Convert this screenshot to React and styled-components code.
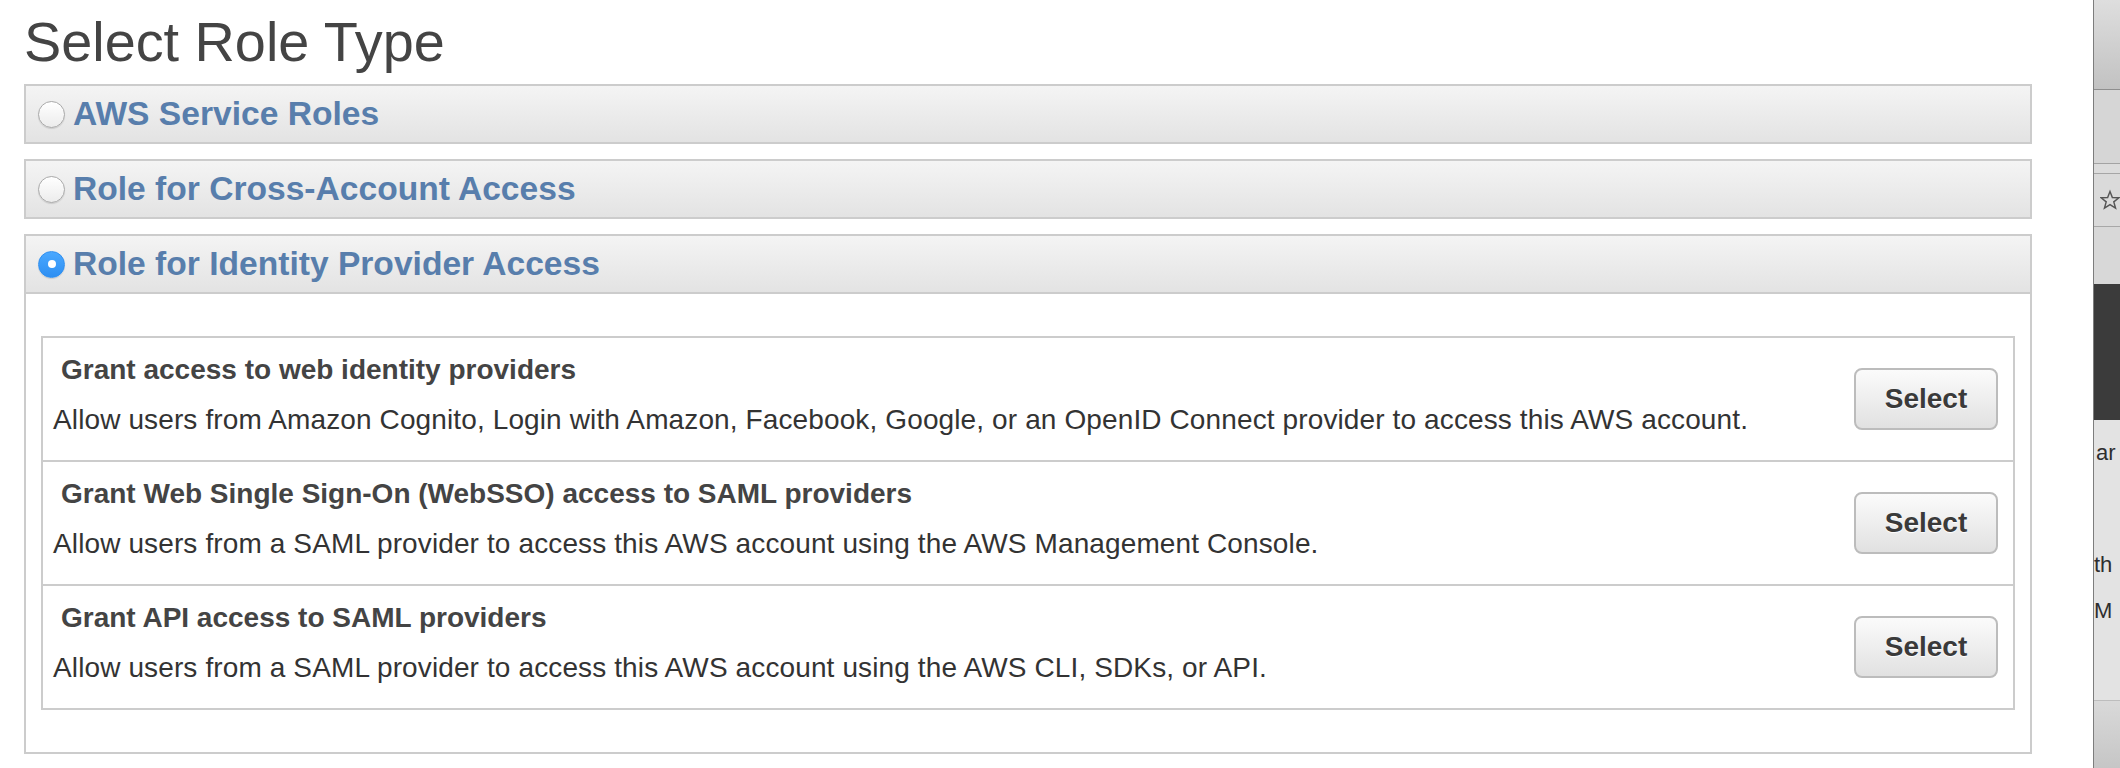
import React from 'react';
import styled, { createGlobalStyle } from 'styled-components';

const GlobalStyle = createGlobalStyle`
  html, body {
    margin: 0;
    padding: 0;
    background: #fff;
    overflow: hidden;
  }
  body {
    font-family: "Liberation Sans", Arial, Helvetica, sans-serif;
  }
`;

const Page = styled.div`
  display: flex;
  width: 2120px;
  height: 768px;
`;

const Main = styled.main`
  flex: 1;
  padding: 0 61px 0 24px;
`;

const Title = styled.h1`
  margin: 0;
  font-size: 55.8px;
  line-height: 84px;
  font-weight: 400;
  color: #444;
`;

const Section = styled.section`
  margin-bottom: 15px;
`;

const SectionHeader = styled.label`
  display: flex;
  align-items: center;
  gap: 8px;
  box-sizing: border-box;
  height: 60px;
  padding-left: 12px;
  border: 2px solid #cccccc;
  background: linear-gradient(#f4f4f4, #e3e3e3);
  cursor: pointer;
`;

const Radio = styled.span`
  position: relative;
  box-sizing: border-box;
  width: 27px;
  height: 27px;
  border-radius: 50%;
  flex: none;
  border: 1px solid ${({ checked }) => (checked ? '#2f8ff0' : '#a9a9a9')};
  background: ${({ checked }) => (checked
    ? 'linear-gradient(#4aa8ff, #2e8ff2)'
    : 'linear-gradient(#ffffff, #ececec)')};
  box-shadow: 0 1px 1px rgba(0, 0, 0, .12);

  &::after {
    content: '';
    display: ${({ checked }) => (checked ? 'block' : 'none')};
    position: absolute;
    left: 50%;
    top: 50%;
    width: 8px;
    height: 8px;
    margin: -4px 0 0 -4px;
    border-radius: 50%;
    background: #fff;
  }
`;

const SectionTitle = styled.span`
  font-size: 33.6px;
  font-weight: 700;
  color: #587eac;
`;

const SectionBody = styled.div`
  border: 2px solid #cccccc;
  border-top: 0;
  padding: 42px 15px 42px;
`;

const ProviderList = styled.div`
  border: 2px solid #cccccc;
`;

const ProviderRow = styled.div`
  display: flex;
  align-items: center;
  justify-content: space-between;
  padding: 16px 15px 24px 10px;

  & + & {
    border-top: 2px solid #cccccc;
  }
`;

const ProviderText = styled.div`
  display: flex;
  flex-direction: column;
  gap: 18px;
`;

const ProviderName = styled.div`
  padding-left: 8px;
  font-size: 28px;
  line-height: 32px;
  font-weight: 700;
  color: #444;
`;

const ProviderDesc = styled.div`
  font-size: 28px;
  line-height: 32px;
  letter-spacing: 0.12px;
  color: #333;
`;

const SelectButton = styled.button`
  box-sizing: border-box;
  width: 144px;
  height: 62px;
  margin-top: 8px;
  border: 2px solid #bcbcbc;
  border-radius: 8px;
  background: linear-gradient(#fbfbfb, #e1e1e1);
  font-family: inherit;
  font-size: 28px;
  font-weight: 700;
  color: #3a3a3a;
  text-shadow: 0 1px 1px #fff;
  cursor: pointer;
`;

/* slice of a neighbouring window at the right screen edge */
const SideStrip = styled.aside`
  width: 26px;
  display: flex;
  flex-direction: column;
  overflow: hidden;
  border-left: 1px solid #7d7d7d;
  box-shadow: inset 3px 0 3px -2px rgba(0, 0, 0, .25);
`;

const StripBand = styled.div`
  flex: ${({ h }) => (h ? `0 0 ${h}px` : '1')};
  background: ${({ bg }) => bg};
  border-bottom: ${({ line }) => (line ? `1px solid ${line}` : '0')};
  overflow: hidden;
`;

const StarSlot = styled.div`
  display: flex;
  align-items: center;
  height: 100%;
  padding-left: 6px;
`;

const StripText = styled.div`
  margin-top: ${({ top }) => top}px;
  padding-left: ${({ indent }) => indent}px;
  font-size: 22px;
  line-height: 26px;
  color: #2e2e2e;
  white-space: nowrap;
`;

const StarIcon = () => (
  <svg width="28" height="28" viewBox="0 0 28 28" fill="none">
    <polygon
      points="14,2 17.3,10.6 26.5,10.9 19.3,16.6 21.8,25.5 14,20.4 6.2,25.5 8.7,16.6 1.5,10.9 10.7,10.6"
      stroke="#555"
      strokeWidth="2"
      strokeLinejoin="miter"
    />
  </svg>
);

const providers = [
  {
    name: 'Grant access to web identity providers',
    desc: 'Allow users from Amazon Cognito, Login with Amazon, Facebook, Google, or an OpenID Connect provider to access this AWS account.',
  },
  {
    name: 'Grant Web Single Sign-On (WebSSO) access to SAML providers',
    desc: 'Allow users from a SAML provider to access this AWS account using the AWS Management Console.',
  },
  {
    name: 'Grant API access to SAML providers',
    desc: 'Allow users from a SAML provider to access this AWS account using the AWS CLI, SDKs, or API.',
  },
];

const roleTypes = [
  { id: 'service', label: 'AWS Service Roles' },
  { id: 'cross', label: 'Role for Cross-Account Access' },
  { id: 'idp', label: 'Role for Identity Provider Access' },
];

const App = () => {
  const selected = 'idp';

  return (
    <Page>
      <GlobalStyle />
      <Main>
        <Title>Select Role Type</Title>
        {roleTypes.map((role) => (
          <Section key={role.id}>
            <SectionHeader>
              <Radio checked={role.id === selected} />
              <SectionTitle>{role.label}</SectionTitle>
            </SectionHeader>
            {role.id === selected && (
              <SectionBody>
                <ProviderList>
                  {providers.map((p) => (
                    <ProviderRow key={p.name}>
                      <ProviderText>
                        <ProviderName>{p.name}</ProviderName>
                        <ProviderDesc>{p.desc}</ProviderDesc>
                      </ProviderText>
                      <SelectButton type="button">Select</SelectButton>
                    </ProviderRow>
                  ))}
                </ProviderList>
              </SectionBody>
            )}
          </Section>
        ))}
      </Main>
      <SideStrip>
        <StripBand h={89} bg="linear-gradient(#dedede, #c2c2c2)" line="#8e8e8e" />
        <StripBand h={73} bg="#d6d6d6" line="#a3a3a3" />
        <StripBand h={9} bg="#dcdcdc" line="#a6a6a6" />
        <StripBand h={52} bg="#dadada" line="#a8a8a8">
          <StarSlot><StarIcon /></StarSlot>
        </StripBand>
        <StripBand h={57} bg="#d8d8d8" />
        <StripBand h={136} bg="#3b3b3b" />
        <StripBand h={280} bg="#e3e3e3" line="#bdbdbd">
          <StripText top={20} indent={2}>ar</StripText>
          <StripText top={86} indent={0}>th</StripText>
          <StripText top={20} indent={0}>M</StripText>
        </StripBand>
        <StripBand bg="linear-gradient(#d9d9d9, #c6c6c6)" />
      </SideStrip>
    </Page>
  );
};

export default App;
